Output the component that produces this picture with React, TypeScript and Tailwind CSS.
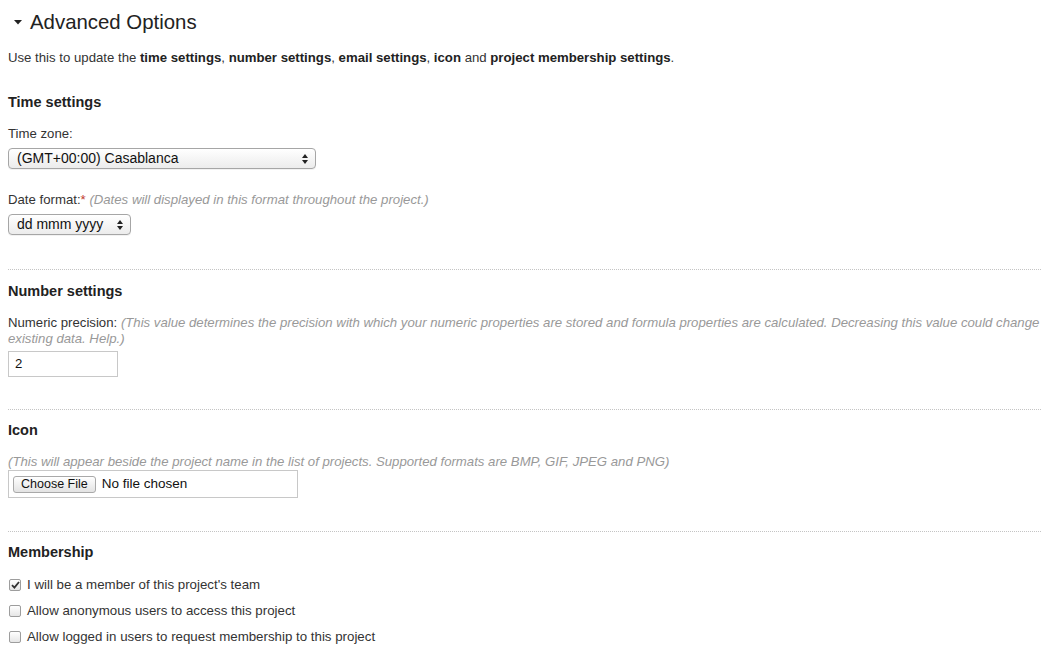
import React from 'react'

const font = { fontFamily: '"Liberation Sans", Arial, Helvetica, sans-serif' }

const SelectBox = ({ value, width }: { value: string; width: string }) => (
  <div
    className={`${width} h-[21px] mt-[5px] flex items-center justify-between pl-[8px] pr-[7px] rounded-[4px] border border-[#a6a6a6] bg-gradient-to-b from-white to-[#ececec] shadow-[0_1px_0_rgba(0,0,0,0.05)] text-[14px] text-[#111]`}
  >
    <span>{value}</span>
    <svg width="6" height="10" viewBox="0 0 6 10">
      <path d="M3 0 L6 4 L0 4 Z" fill="#222" />
      <path d="M0 6 L6 6 L3 10 Z" fill="#222" />
    </svg>
  </div>
)

const Divider = ({ className }: { className: string }) => (
  <div className={`${className} border-t border-dotted border-[#c4c4c4]`} />
)

const Heading = ({ children, className }: { children: React.ReactNode; className: string }) => (
  <h3 className={`${className} text-[14.5px] leading-[20px] font-bold text-[#222]`}>{children}</h3>
)

const Check = ({ checked, label, className }: { checked?: boolean; label: string; className: string }) => (
  <label className={`${className} flex items-center h-[18px] text-[13.3px] text-[#333]`}>
    <span className="w-[12px] h-[12px] ml-[1px] mr-[6px] rounded-[2px] border border-[#9d9d9d] bg-gradient-to-b from-white to-[#e6e6e6] flex items-center justify-center">
      {checked && (
        <svg width="9" height="8" viewBox="0 0 9 8">
          <path d="M1 4.2 L3.4 6.6 L8 1" stroke="#333" strokeWidth="1.8" fill="none" />
        </svg>
      )}
    </span>
    {label}
  </label>
)

export default function App() {
  return (
    <div className="bg-white min-h-[666px] pl-[8px] pr-[6px] text-[#333]" style={font}>
      <div className="pt-[10px] h-[34px] flex items-center">
        <svg width="8" height="5" viewBox="0 0 8 5" className="ml-[6px] mr-[8px] mt-[1px]">
          <path d="M0 0 L8 0 L4 4.5 Z" fill="#222" />
        </svg>
        <h2 className="text-[20.4px] leading-[24px] text-[#222]">Advanced Options</h2>
      </div>

      <p className="mt-[15px] text-[13.2px] leading-[18px]">
        Use this to update the <b className="text-[#222]">time settings</b>, <b className="text-[#222]">number settings</b>,{' '}
        <b className="text-[#222]">email settings</b>, <b className="text-[#222]">icon</b> and{' '}
        <b className="text-[#222]">project membership settings</b>.
      </p>

      <Heading className="mt-[25px]">Time settings</Heading>
      <div className="mt-[13px] text-[13.2px] leading-[18px]">Time zone:</div>
      <SelectBox value="(GMT+00:00) Casablanca" width="w-[308px]" />

      <div className="mt-[22px] text-[13.2px] leading-[18px]">
        Date format:<span className="text-[#c0392b]">*</span>{' '}
        <i className="text-[#999]">(Dates will displayed in this format throughout the project.)</i>
      </div>
      <SelectBox value="dd mmm yyyy" width="w-[123px]" />

      <Divider className="mt-[34px]" />

      <Heading className="mt-[11px]">Number settings</Heading>
      <div className="mt-[14px] text-[13.2px] leading-[16px]">
        Numeric precision:{' '}
        <i className="text-[#999]">
          (This value determines the precision with which your numeric properties are stored and formula properties are
          calculated. Decreasing this value could change existing data. Help.)
        </i>
      </div>
      <div className="mt-[4px] w-[110px] h-[26px] border border-[#c8c8c8] flex items-center pl-[6px] text-[13.2px] text-[#111]">
        2
      </div>

      <Divider className="mt-[32px]" />

      <Heading className="mt-[10px]">Icon</Heading>
      <div className="mt-[14px] text-[13.2px] leading-[16px]">
        <i className="text-[#999]">
          (This will appear beside the project name in the list of projects. Supported formats are BMP, GIF, JPEG and PNG)
        </i>
      </div>
      <div className="w-[290px] h-[28px] border border-[#c8c8c8] flex items-center pl-[4px] text-[13.5px] text-[#111]">
        <span className="h-[17px] px-[7px] flex items-center rounded-[3px] border border-[#a9a9a9] bg-gradient-to-b from-white to-[#e3e3e3] text-[12.5px]">
          Choose File
        </span>
        <span className="ml-[6px]">No file chosen</span>
      </div>

      <Divider className="mt-[33px]" />

      <Heading className="mt-[10px]">Membership</Heading>
      <Check className="mt-[14px]" checked label="I will be a member of this project's team" />
      <Check className="mt-[8px]" label="Allow anonymous users to access this project" />
      <Check className="mt-[8px]" label="Allow logged in users to request membership to this project" />
    </div>
  )
}
